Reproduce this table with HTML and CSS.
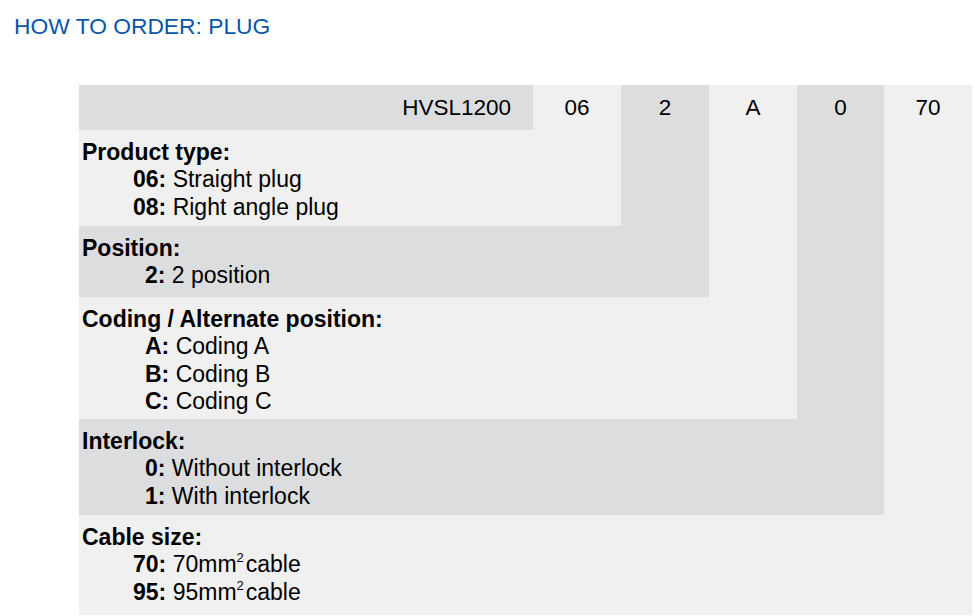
FILE: index.html
```html
<!DOCTYPE html>
<html lang="en">
<head>
<meta charset="utf-8">
<title>How to order: plug</title>
<link rel="stylesheet" href="styles.css">
</head>
<body>
<h1 class="title">HOW TO ORDER: PLUG</h1>
<div class="order-table">
  <div class="cell dark head part">HVSL1200</div>
  <div class="cell light head c2">06</div>
  <div class="cell dark head c3">2</div>
  <div class="cell light head c4">A</div>
  <div class="cell dark head c5">0</div>
  <div class="cell light head c6">70</div>

  <div class="cell light group g-product">
    <div class="label">Product type:</div>
    <div class="opt ind-2"><b>06:</b> Straight plug</div>
    <div class="opt ind-2"><b>08:</b> Right angle plug</div>
  </div>
  <div class="cell dark group g-position">
    <div class="label">Position:</div>
    <div class="opt ind-1"><b>2:</b> 2 position</div>
  </div>
  <div class="cell light group g-coding">
    <div class="label">Coding / Alternate position:</div>
    <div class="opt ind-1"><b>A:</b> Coding A</div>
    <div class="opt ind-1"><b>B:</b> Coding B</div>
    <div class="opt ind-1"><b>C:</b> Coding C</div>
  </div>
  <div class="cell dark group g-interlock">
    <div class="label">Interlock:</div>
    <div class="opt ind-1"><b>0:</b> Without interlock</div>
    <div class="opt ind-1"><b>1:</b> With interlock</div>
  </div>
  <div class="cell light group g-cable">
    <div class="label">Cable size:</div>
    <div class="opt ind-2"><b>70:</b> 70mm<sup>2</sup>cable</div>
    <div class="opt ind-2"><b>95:</b> 95mm<sup>2</sup>cable</div>
  </div>
</div>
</body>
</html>
```
FILE: styles.css
```css
html, body {
  margin: 0;
  padding: 0;
  background: #ffffff;
}

body {
  font-family: "Liberation Sans", Arial, sans-serif;
  color: #000;
}

.title {
  margin: 13px 0 0 14px;
  font-size: 22.8px;
  line-height: 26px;
  font-weight: normal;
  color: #0b56a8;
}

.order-table {
  margin: 46px 0 0 79px;
  display: grid;
  grid-template-columns: 454px 88px 88px 88px 87px 88px;
  grid-template-rows: 45px 96px 71px 122px 96px 100px;
  width: 893px;
}

.cell {
  font-size: 23px;
}

.dark { background: #dcdddf; }
.light { background: #f0f0f0; }

.head {
  font-size: 22.5px;
  line-height: 45px;
  text-align: center;
}

.part {
  grid-column: 1;
  grid-row: 1;
  text-align: right;
  padding-right: 22px;
}

.c2 { grid-column: 2; grid-row: 1; }
.c3 { grid-column: 3; grid-row: 1 / span 2; }
.c4 { grid-column: 4; grid-row: 1 / span 3; }
.c5 { grid-column: 5; grid-row: 1 / span 4; }
.c6 { grid-column: 6; grid-row: 1 / span 5; }

.group {
  padding: 8.5px 0 0 3px;
  line-height: 27.5px;
}

.g-product { grid-column: 1 / span 2; grid-row: 2; }
.g-position { grid-column: 1 / span 3; grid-row: 3; }
.g-coding { grid-column: 1 / span 4; grid-row: 4; }
.g-interlock { grid-column: 1 / span 5; grid-row: 5; }
.g-cable { grid-column: 1 / span 6; grid-row: 6; }

.label {
  font-weight: bold;
}

.opt b {
  font-weight: bold;
}

.ind-2 { padding-left: 51px; }
.ind-1 { padding-left: 63px; }

sup {
  font-size: 13px;
  line-height: 0;
  vertical-align: 10px;
  margin-right: 2px;
}
```
